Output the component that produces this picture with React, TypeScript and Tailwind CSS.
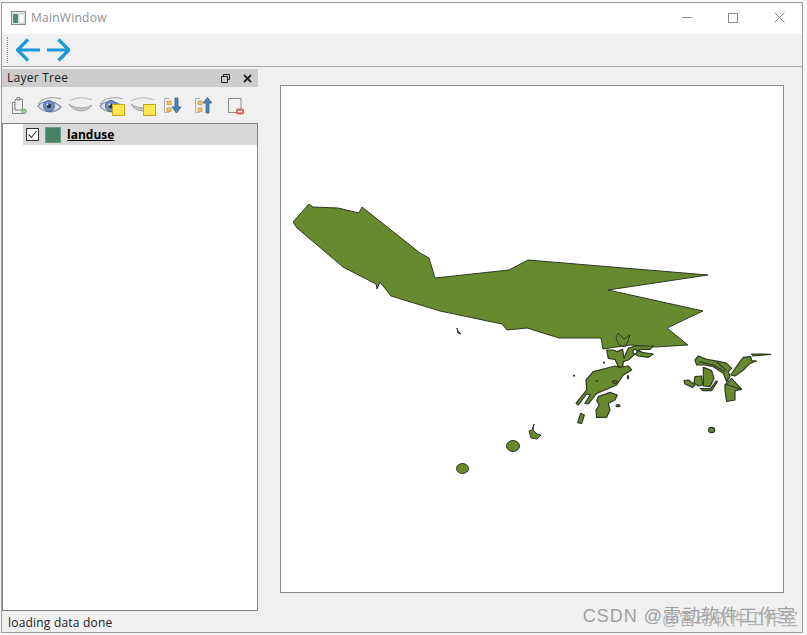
const MAIN =
  "293,222 309,204 313,207 338,208 359,213 362,207 420,253 429,258 435,278 509,270 528,260 708,275 608,290 703,311 667,328 688,345 655,347 630,345 603,349 601,338 559,338 527,328 507,330 502,324 440,311 391,296 380,282 377,289 376,284 343,267 297,228";

// traced at 3x from the crop around (560,330)
const ISLANDS = [
  "140,60 160,60 172,65 188,58 192,85 200,65 205,55 225,48 280,48 270,58 245,58 232,62 250,68 280,72 265,82 235,78 225,72 205,90 190,95 188,112 175,110 165,88 145,85",
  "205,108 215,120 190,135 170,165 110,190 85,222 75,220 90,195 80,192 55,225 48,220 80,180 78,150 100,125 165,108 178,112",
  "115,200 150,187 172,195 165,210 145,220 150,240 140,262 110,262 108,240 118,225 110,212",
  "62,250 73,255 65,280 53,278",
  "405,90 415,78 440,88 480,95 500,100 515,115 505,125 510,140 500,155 490,130 460,110 435,105 410,105",
  "430,112 455,122 462,145 450,170 430,168",
  "372,152 385,150 405,165 398,172 375,162",
  "405,140 425,138 428,165 415,168 402,158",
  "420,175 430,182 455,182 472,155 468,153 452,176 430,176",
  "512,135 540,95 550,82 572,80 575,92 590,93 570,100 550,120 525,138",
  "575,72 632,73 580,78",
  "515,145 545,178 525,182 525,210 500,214 495,180 495,165",
];

function OpenEye() {
  return (
    <>
      <path d="M1 8 C5 2 15 0 24 3" fill="none" stroke="#9a9a9a" strokeWidth="1" />
      <path d="M1 10 C6 4 17 4 24 11 C17 18 6 17 1 10Z" fill="#dfe5ee" stroke="#7d8ba3" strokeWidth="1.2" />
      <circle cx="12" cy="10" r="5.6" fill="#6f8cbd" stroke="#4c618a" strokeWidth="0.8" />
      <circle cx="12" cy="10" r="2.3" fill="#26314d" />
      <circle cx="10.5" cy="8.5" r="1" fill="#e8eef8" />
    </>
  );
}

function ClosedEye() {
  return (
    <>
      <path d="M1 5 C8 1 17 1 24 4" fill="none" stroke="#b5b5b5" strokeWidth="1" />
      <path d="M1 8 C5 16 18 18 24 9 C18 13 7 13 1 8Z" fill="#c4c6c4" stroke="#a0a4a0" strokeWidth="1" />
    </>
  );
}

function Note() {
  return <rect x="13.5" y="8.5" width="12" height="11" fill="#fde74c" stroke="#c9a51e" strokeWidth="1" />;
}

function TreeArrow({ up }: { up?: boolean }) {
  return (
    <>
      <path d="M3.5 2.5 H8 M3.5 2.5 V16.5 H8" fill="none" stroke="#b0b0b0" strokeWidth="1" />
      <rect x="6" y="5" width="4" height="3.5" fill="#f3c26b" stroke="#d28f2c" strokeWidth="0.7" />
      <rect x="6" y="12" width="4" height="3.5" fill="#f3c26b" stroke="#d28f2c" strokeWidth="0.7" />
      <path
        d={up ? "M14 17 V7 H11 L15.5 1.5 L20 7 H17 V17Z" : "M14 2 V11 H11 L15.5 17 L20 11 H17 V2Z"}
        fill="#4d85b5"
        stroke="#365f86"
        strokeWidth="0.8"
      />
    </>
  );
}

function ToolIcon({ children }: { children: React.ReactNode }) {
  return (
    <div className="flex h-[30px] w-[31px] items-center justify-center">
      <svg width="27" height="21" viewBox="0 0 27 21">
        {children}
      </svg>
    </div>
  );
}

export default function App() {
  return (
    <div className="h-[635px] w-[807px] overflow-hidden bg-[#f7f7f7] pb-[2px] pl-[1px] pr-[4px] pt-[2px] font-['Open_Sans',sans-serif] text-black">
      <div className="relative flex h-full flex-col border border-[#9c9c9c] bg-[#f0f0f0]">
        {/* title bar */}
        <div className="flex h-[31px] shrink-0 items-center bg-white pb-[2px] pl-[9px]">
          <svg width="15" height="14" viewBox="0 0 15 14">
            <rect x="0.5" y="0.5" width="14" height="13" fill="#e6e6e6" stroke="#8a8a8a" />
            <rect x="2" y="3" width="5" height="9" fill="#4f8a78" />
            <rect x="8" y="3" width="5" height="9" fill="#ffffff" stroke="#b5b5b5" strokeWidth="0.6" />
          </svg>
          <span className="ml-[5px] text-[12px] tracking-[0.25px] text-[#8f8f8f]">MainWindow</span>
          <div className="ml-auto flex items-center">
            <div className="flex w-[46px] justify-center">
              <div className="h-px w-[10px] bg-[#8a8a8a]" />
            </div>
            <div className="flex w-[46px] justify-center">
              <div className="h-[10px] w-[10px] border border-[#8a8a8a]" />
            </div>
            <div className="flex w-[46px] justify-center">
              <svg width="11" height="11" viewBox="0 0 11 11">
                <path d="M0.5 0.5 L10.5 10.5 M10.5 0.5 L0.5 10.5" stroke="#8a8a8a" strokeWidth="1" />
              </svg>
            </div>
          </div>
        </div>

        {/* toolbar */}
        <div className="flex h-[33px] shrink-0 items-center border-b border-[#a9a9a9] pl-[5px]">
          <div className="h-[26px] w-px border-l border-dotted border-[#8f8f8f]" />
          <svg className="ml-[8px]" width="54" height="24" viewBox="0 0 54 24">
            <path
              d="M24 12 H1.5 M12 1.5 L1.5 12 L12 22.5 M31 12 H53 M42.5 1.5 L53 12 L42.5 22.5"
              fill="none"
              stroke="#1b98dc"
              strokeWidth="3.2"
            />
          </svg>
        </div>

        <div className="flex min-h-0 flex-1">
          {/* layer tree dock */}
          <div className="flex w-[256px] shrink-0 flex-col pt-[2px]">
            <div className="flex h-[18px] shrink-0 items-center bg-[#cdcdcd] pl-[5px] pr-[6px] text-[12px] tracking-[0.25px] text-[#222]">
              Layer Tree
              <svg className="ml-auto" width="9" height="9" viewBox="0 0 9 9">
                <path d="M2.5 2.5 V0.5 H8.5 V5.5 H6.5 M0.5 2.5 H6.5 V8.5 H0.5Z" fill="none" stroke="#222" strokeWidth="1" />
              </svg>
              <svg className="ml-[13px]" width="9" height="9" viewBox="0 0 9 9">
                <path d="M1 1 L8 8 M8 1 L1 8" stroke="#222" strokeWidth="1.8" />
              </svg>
            </div>
            <div className="flex h-[36px] shrink-0 items-center pl-[2px] pt-[2px]">
              <ToolIcon>
                <path d="M9 6.5 H6.5 V17.5 H17 M9 3.5 H16.5 V14 H9Z M11 1.5 H14 V4 H11Z M8 9 H9 M8 12 H9" fill="none" stroke="#858585" strokeWidth="1" />
                <circle cx="18" cy="15.5" r="2.3" fill="#a9c9a5" stroke="#6f8f6c" strokeWidth="0.8" />
              </ToolIcon>
              <ToolIcon>
                <OpenEye />
              </ToolIcon>
              <ToolIcon>
                <ClosedEye />
              </ToolIcon>
              <ToolIcon>
                <OpenEye />
                <Note />
              </ToolIcon>
              <ToolIcon>
                <ClosedEye />
                <Note />
              </ToolIcon>
              <ToolIcon>
                <TreeArrow />
              </ToolIcon>
              <ToolIcon>
                <TreeArrow up />
              </ToolIcon>
              <ToolIcon>
                <path d="M5.5 2.5 H18 V14 M5.5 2.5 V16.5 H13" fill="none" stroke="#8a8a8a" strokeWidth="1" />
                <rect x="13.5" y="13" width="7" height="5" rx="1" fill="#ee6d78" stroke="#c9404e" strokeWidth="0.7" />
                <rect x="15" y="15" width="4" height="1.2" fill="#fff" />
              </ToolIcon>
            </div>
            <div className="min-h-0 flex-1 border border-[#828282] bg-white pl-[20px]">
              <div className="flex h-[21px] items-center bg-[#d9d9d9] pl-[3px]">
                <div className="flex h-[13px] w-[13px] items-center justify-center border border-[#333] bg-white">
                  <svg width="11" height="11" viewBox="0 0 11 11">
                    <path d="M1.5 5.5 L4.5 8.5 L9.5 2" fill="none" stroke="#333" strokeWidth="1.1" />
                  </svg>
                </div>
                <div className="ml-[6px] h-[16px] w-[16px] border border-[#6f9a86] bg-[#468264]" />
                <span className="ml-[6px] text-[12px] font-bold underline">landuse</span>
              </div>
            </div>
          </div>

          {/* map canvas */}
          <div className="min-w-0 flex-1 pb-[18px] pl-[22px] pr-[18px] pt-[18px]">
            <div className="h-full border border-[#8c8c8c] bg-white">
              <svg width="502" height="506" viewBox="281 86 502 506">
                <g fill="#688a2f" stroke="#2f3a25" strokeWidth="1" strokeLinejoin="round">
                  <polygon points={MAIN} />
                  <g transform="translate(560 330) scale(0.3333)" strokeWidth="3.6">
                    {ISLANDS.map((pts) => (
                      <polygon key={pts} points={pts} />
                    ))}
                    <ellipse cx="455" cy="300" rx="9" ry="8" />
                    <ellipse cx="174" cy="227" rx="6" ry="3" />
                    <circle cx="42" cy="137" r="1.5" />
                    <circle cx="132" cy="98" r="1.5" />
                    <circle cx="110" cy="153" r="1.5" />
                    <ellipse cx="165" cy="156" rx="7" ry="4" />
                    <ellipse cx="204" cy="142" rx="2" ry="5" />
                    <ellipse cx="225" cy="65" rx="6" ry="7" fill="#ffffff" />
                    <path d="M418 95 L460 105 L495 125 M470 96 L500 122 M495 162 L545 178" fill="none" />
                  </g>
                  <polygon points="618,333 624,339 630,335 628,341 625,347 619,345 616,338" fill="none" />
                  <ellipse cx="513" cy="446" rx="6.5" ry="5.5" />
                  <ellipse cx="462.5" cy="468.5" rx="6" ry="5" />
                  <polygon points="534,424 532,430 529,431 531,438 537,439 541,435 537,434 533,430" />
                  <polygon points="457,328 458,331 461,334 458,333" />
                </g>
              </svg>
            </div>
          </div>
        </div>

        {/* status bar */}
        <div className="flex h-[21px] shrink-0 items-center pl-[6px] pt-[2px] text-[12px] tracking-[0.2px] text-[#222]">
          loading data done
        </div>

        {/* CSDN watermark */}
        <div className="absolute bottom-[6px] right-[6px] whitespace-nowrap font-['Liberation_Sans','Noto_Sans_CJK_SC',sans-serif] text-[18px] leading-[20px] tracking-[1px] text-[#a0a0a0]">
          CSDN @雷动软件工作室
        </div>
        <div className="absolute bottom-[2px] right-[4px] whitespace-nowrap font-['Liberation_Sans','Noto_Sans_CJK_SC',sans-serif] text-[17px] leading-[20px] text-[#b4b4b4]">
          @雷动软件工作室
        </div>
      </div>
    </div>
  );
}
